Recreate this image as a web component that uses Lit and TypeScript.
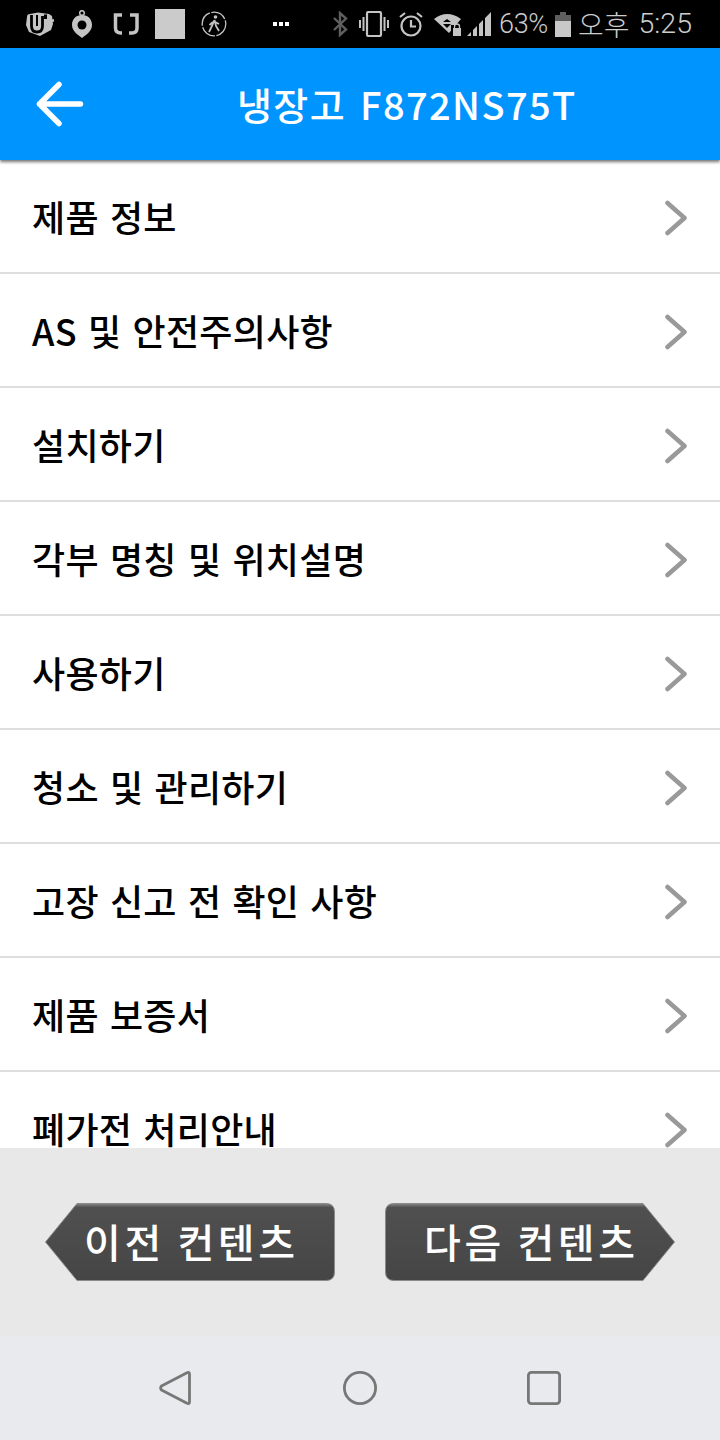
import { LitElement, html, css } from "lit";
import { customElement } from "lit/decorators.js";

const ITEMS = ["제품 정보","AS 및 안전주의사항","설치하기","각부 명칭 및 위치설명","사용하기","청소 및 관리하기","고장 신고 전 확인 사항","제품 보증서","폐가전 처리안내"];

@customElement("app-root")
export class AppRoot extends LitElement {
  static styles = css`
    :host { display:block; width:720px; height:1440px; overflow:hidden; font-family:"Noto Sans CJK KR","Noto Sans",sans-serif; background:#fff; }
    .page { display:flex; flex-direction:column; height:1440px; }
    .status { height:48px; background:#000; display:flex; align-items:center; color:#ccc; flex:none; }
    .status svg { display:block; flex:none; }
    .m25{margin-left:25px}.m16{margin-left:16px}.m20{margin-left:20px}.m46{margin-left:46px}.m44{margin-left:44px}.m11{margin-left:11px}.m10{margin-left:10px}.m5{margin-left:5px}.m8{margin-left:8px}
    .pct { margin-left:7px; font:300 27px/48px Roboto,sans-serif; letter-spacing:-.3px; width:48px; white-space:nowrap; }
    .time { margin-left:7px; font:300 28px/48px "Noto Sans CJK KR",sans-serif; white-space:nowrap; display:flex; }
    .clock { margin-left:9px; font:300 28.500px/48px Roboto,sans-serif; }
    .head { height:112px; background:#0094ff; box-shadow:0 2px 3px rgba(0,0,0,.55); display:flex; align-items:center; flex:none; position:relative; z-index:1; color:#fff; }
    .back { margin-left:36px; display:block; }
    .title { margin-left:153px; font-size:38px; font-weight:500; letter-spacing:1.4px; word-spacing:4px; white-space:nowrap; line-height:112px; }
    .list { flex:1; min-height:0; overflow:hidden; background:#fff; }
    .row { height:112px; border-bottom:2px solid #dedede; display:flex; align-items:center; justify-content:space-between; padding:0 33px 0 32px; color:#000; }
    .label { font-size:36px; font-weight:500; letter-spacing:.3px; word-spacing:2.700px; white-space:nowrap; }
    .chev { display:block; margin-top:4px; }
    .foot { height:188px; background:#e8e8e8; flex:none; display:flex; align-items:flex-start; justify-content:space-between; padding:55px 45px 0; box-sizing:border-box; }
    .btn { width:290px; height:78px; position:relative; color:#fff; font-size:40px; font-weight:500; letter-spacing:3.6px; display:flex; align-items:center; white-space:nowrap; }
    .btn svg { position:absolute; inset:0; }
    .btn span { position:relative; line-height:78px; margin-top:-3px; margin-left:39px; }
    .nav { height:104px; background:#e9eaee; flex:none; display:flex; align-items:center; padding-left:159px; }
    .nav svg { display:block; }
    .nav .c { margin-left:152px; }
    .nav .s { margin-left:150px; }
  `;

  render() {
    return html`<div class="page">
      <div class="status">
        <svg class="m25" width="30" height="26" viewBox="0 0 30 26" fill="none">
          <path d="M2 6 Q2 3 5 3 L13 1.500 L24 3 L27 5 L28 13 L26 19 L15 25 L4 21 L1 14Z" fill="#c4c4c4"/>
          <path d="M6.500 4 V15 Q6.500 21 12 21 Q17.500 21 17.500 15 V5" stroke="#000" stroke-width="2.800"/>
          <path d="M12 4 V15" stroke="#000" stroke-width="2"/>
          <path d="M20 9.500 H29 M24.500 5 V14" stroke="#c4c4c4" stroke-width="2.500"/>
          <path d="M19 3.500 H22 V8 H19Z" fill="#000"/>
        </svg>
        <svg class="m16" width="22" height="28" viewBox="0 0 22 28"><circle cx="11" cy="3" r="2.300" fill="none" stroke="#c4c4c4" stroke-width="1.500"/><path d="M11 5 C17 5 21 9 21 15 C21 21 15 25 11 28 C7 25 1 21 1 15 C1 9 5 5 11 5Z" fill="#c4c4c4"/><circle cx="11" cy="15" r="4.500" fill="#000"/></svg>
        <svg class="m20" width="26" height="22" viewBox="0 0 26 22" fill="none" stroke="#c4c4c4" stroke-width="3.500"><path d="M9 2 H2.500 V15 Q2.500 20 8 20 H9"/><path d="M17 2 H24 V15 Q24 20 19 20 H16"/></svg>
        <svg class="m16" width="30" height="30" viewBox="0 0 30 30"><rect width="30" height="30" fill="#cbcbcb"/></svg>
        <svg class="m16" width="26" height="26" viewBox="0 0 26 26" fill="none" stroke="#c4c4c4"><circle cx="13" cy="13" r="11.800" stroke-width="1.300" stroke-dasharray="16 1.500"/><circle cx="14.500" cy="6" r="1.800" fill="#c4c4c4" stroke="none"/><path d="M13.500 9 L11 15 L8 21 M13.500 9 L15 15 L18 20 M12 11 L8.500 14 M14 11 L18 13" stroke-width="1.800"/></svg>
        <svg class="m46" width="16" height="4" viewBox="0 0 16 4" fill="#fff"><rect x="0" width="4" height="4"/><rect x="6" width="4" height="4"/><rect x="12" width="4" height="4"/></svg>
        <svg class="m44" width="15" height="26" viewBox="0 0 15 26" fill="none" stroke="#5e5e5e" stroke-width="2.400"><path d="M1 7 L13 18.500 L7 24 V2 L13 7.500 L1 19"/></svg>
        <svg class="m11" width="30" height="26" viewBox="0 0 30 26" fill="none" stroke="#c4c4c4" stroke-width="2"><rect x="8" y="1" width="14" height="24" rx="1.500" stroke-width="2.200"/><path d="M4.500 6 V20 M1 9 V17 M25.500 6 V20 M29 9 V17"/></svg>
        <svg class="m10" width="24" height="26" viewBox="0 0 24 26" fill="none" stroke="#c4c4c4" stroke-width="2.200"><circle cx="12" cy="15" r="9.500"/><path d="M12 9 V15.500 H17"/><path d="M1 6 L6 2 M23 6 L18 2"/></svg>
        <svg class="m11" width="28" height="24" viewBox="0 0 28 24"><path d="M0 7 Q13 -3 27 7 L15 21 Z" fill="#c4c4c4"/><path d="M13 7 L17 10 H9Z M9 12 H17 L13 16Z" fill="#000"/><rect x="17" y="13" width="11" height="11" fill="#000"/><rect x="19" y="16" width="8" height="8" fill="#c4c4c4"/><path d="M20.500 16 V14.500 A2.500 2.500 0 0 1 25.500 14.500 V16" fill="none" stroke="#c4c4c4" stroke-width="1.300"/></svg>
        <svg class="m5" width="25" height="24" viewBox="0 0 25 24" fill="#c4c4c4"><path d="M0 24 L4 20 V24Z M6 24 V18 L10 14 V24Z M12 24 V12 L16 8 V24Z M18 24 V6 L24 0 V24Z"/></svg>
        <span class="pct">63%</span>
        <svg class="m8" width="16" height="25" viewBox="0 0 16 25"><rect x="5" y="0" width="6" height="3" fill="#5e5e5e"/><rect x="0" y="3" width="16" height="6" fill="#5e5e5e"/><rect x="0" y="9" width="16" height="16" fill="#c8c8c8"/></svg>
        <span class="time">오후<span class="clock">5:25</span></span>
      </div>
      <div class="head">
        <svg class="back" width="48" height="46" viewBox="0 0 48 46" fill="none" stroke="#fff" stroke-width="5.500" stroke-linecap="round" stroke-linejoin="round"><path d="M3.500 23 H44.500 M23 3.500 L3.500 23 L23 42.500"/></svg>
        <div class="title">냉장고 F872NS75T</div>
      </div>
      <div class="list">
        ${ITEMS.map(t => html`<div class="row"><div class="label">${t}</div>
          <svg class="chev" width="22" height="36" viewBox="0 0 22 36" fill="none" stroke="#999" stroke-width="4.500" stroke-linecap="round" stroke-linejoin="round"><path d="M2.500 3 L19.500 18 L2.500 33"/></svg></div>`)}
      </div>
      <div class="foot">
        <div class="btn prev">
          <svg width="290" height="78" viewBox="0 0 290 78"><defs><linearGradient id="g" x1="0" y1="0" x2="0" y2="1"><stop offset="0" stop-color="#888"/><stop offset=".05" stop-color="#505050"/><stop offset="1" stop-color="#454545"/></linearGradient></defs>
            <path d="M.5 39 L32 .5 H281 Q289.500 .5 289.500 9 V69 Q289.500 77.500 281 77.500 H32 Z" fill="url(#g)" stroke="#8a8a8a" stroke-width="1"/></svg>
          <span>이전 컨텐츠</span>
        </div>
        <div class="btn next">
          <svg width="290" height="78" viewBox="0 0 290 78"><defs><linearGradient id="g2" x1="0" y1="0" x2="0" y2="1"><stop offset="0" stop-color="#888"/><stop offset=".05" stop-color="#505050"/><stop offset="1" stop-color="#454545"/></linearGradient></defs><path d="M289.500 39 L258 .5 H9 Q.5 .5 .5 9 V69 Q.5 77.500 9 77.500 H258 Z" fill="url(#g2)" stroke="#8a8a8a" stroke-width="1"/></svg>
          <span>다음 컨텐츠</span>
        </div>
      </div>
      <div class="nav">
        <svg width="32" height="34" viewBox="0 0 32 34" fill="none" stroke="#777" stroke-width="2.800" stroke-linejoin="round"><path d="M30.500 3 Q30.500 .8 28 1.800 L2.500 15 Q.8 17 2.500 19 L28 32.200 Q30.500 33.200 30.500 31 Z"/></svg>
        <svg class="c" width="34" height="34" viewBox="0 0 34 34" fill="none" stroke="#777" stroke-width="2.800"><circle cx="17" cy="17" r="15.600"/></svg>
        <svg class="s" width="34" height="34" viewBox="0 0 34 34" fill="none" stroke="#777" stroke-width="2.800"><rect x="1.400" y="1.400" width="31.200" height="31.200" rx="3"/></svg>
      </div>
    </div>`;
  }
}
